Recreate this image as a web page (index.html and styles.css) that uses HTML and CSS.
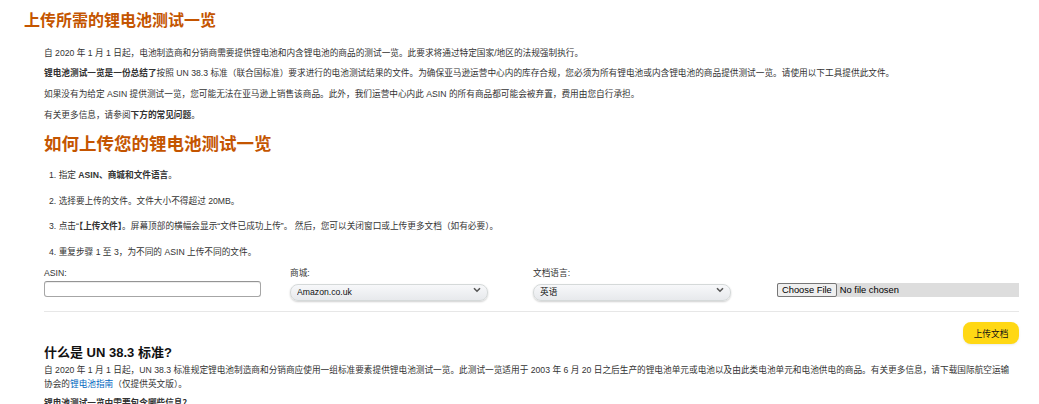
FILE: index.html
```html
<!DOCTYPE html>
<html lang="zh-CN">
<head>
  <meta charset="UTF-8">
  <meta name="viewport" content="width=device-width, initial-scale=1.0">
  <title>上传锂电池测试一览</title>
  <link rel="stylesheet" href="styles.css">
</head>
<body>
  <div class="page">
    <h1 class="title">上传所需的锂电池测试一览</h1>

    <div class="intro">
      <p>自 2020 年 1 月 1 日起，电池制造商和分销商需要提供锂电池和内含锂电池的商品的测试一览。此要求将通过特定国家/地区的法规强制执行。</p>
      <p><b>锂电池测试一览是一份总结了</b>按照 UN 38.3 标准（联合国标准）要求进行的电池测试结果的文件。为确保亚马逊运营中心内的库存合规，您必须为所有锂电池或内含锂电池的商品提供测试一览。请使用以下工具提供此文件。</p>
      <p>如果没有为给定 ASIN 提供测试一览，您可能无法在亚马逊上销售该商品。此外，我们运营中心内此 ASIN 的所有商品都可能会被弃置，费用由您自行承担。</p>
      <p>有关更多信息，请参阅<b>下方的常见问题</b>。</p>
    </div>

    <h2 class="howto">如何上传您的锂电池测试一览</h2>

    <ol class="steps">
      <li>指定 <b>ASIN、商城和文件语言</b>。</li>
      <li>选择要上传的文件。文件大小不得超过 20MB。</li>
      <li>点击“<b>【上传文件】</b>。屏幕顶部的横幅会显示“文件已成功上传”。 然后，您可以关闭窗口或上传更多文档（如有必要）。</li>
      <li>重复步骤 1 至 3，为不同的 ASIN 上传不同的文件。</li>
    </ol>

    <form class="upload-form">
      <div class="fields">
        <div class="field">
          <label for="asin">ASIN:</label>
          <input type="text" id="asin" class="text-input">
        </div>
        <div class="field">
          <label for="market">商城:</label>
          <div class="select-wrap">
            <select id="market">
              <option>Amazon.co.uk</option>
            </select>
            <svg class="chevron" width="8" height="6" viewBox="0 0 8 6"><path d="M1 1.2 L4 4.2 L7 1.2" fill="none" stroke="#555" stroke-width="1.6"/></svg>
          </div>
        </div>
        <div class="field">
          <label for="lang">文档语言:</label>
          <div class="select-wrap">
            <select id="lang">
              <option>英语</option>
            </select>
            <svg class="chevron" width="8" height="6" viewBox="0 0 8 6"><path d="M1 1.2 L4 4.2 L7 1.2" fill="none" stroke="#555" stroke-width="1.6"/></svg>
          </div>
        </div>
        <div class="field field-file">
          <input type="file" class="file-input">
        </div>
      </div>
      <hr class="divider">
      <div class="actions">
        <button type="button" class="upload-btn">上传文档</button>
      </div>
    </form>

    <section class="faq">
      <h3>什么是 UN 38.3 标准?</h3>
      <p>自 2020 年 1 月 1 日起，UN 38.3 标准规定锂电池制造商和分销商应使用一组标准要素提供锂电池测试一览。此测试一览适用于 2003 年 6 月 20 日之后生产的锂电池单元或电池以及由此类电池单元和电池供电的商品。有关更多信息，请下载国际航空运输协会的<a href="#">锂电池指南</a>（仅提供英文版）。</p>
      <p class="faq-next">锂电池测试一览中需要包含哪些信息？</p>
    </section>
  </div>
</body>
</html>
```

FILE: styles.css
```css
* {
    box-sizing: border-box;
}

body {
    margin: 0;
    font-family: "Liberation Sans", "Noto Sans CJK SC", sans-serif;
    color: #333333;
    background: #ffffff;
    overflow: hidden;
}

.page {
    padding: 0 20px 0 24px;
}

.title {
    margin: 0;
    padding-top: 9px;
    font-size: 16px;
    line-height: 24px;
    color: #c45500;
    font-weight: bold;
}

.intro {
    display: flex;
    flex-direction: column;
    gap: 7.7px;
    margin-top: 13.5px;
    padding-left: 20px;
}

.intro p {
    margin: 0;
    font-size: 8.67px;
    line-height: 13px;
}

.howto {
    margin: 10.4px 0 0 20px;
    font-size: 17.5px;
    line-height: 24px;
    color: #c45500;
    font-weight: bold;
}

.steps {
    margin: 13.5px 0 0 0;
    padding-left: 25px;
    list-style-position: inside;
    display: flex;
    flex-direction: column;
    gap: 12.5px;
}

.steps li {
    font-size: 8.67px;
    line-height: 13px;
}

.upload-form {
    margin-top: 8px;
    padding-left: 20px;
}

.fields {
    display: grid;
    grid-template-columns: 246px 243px 244px 1fr;
}

.field {
    display: flex;
    flex-direction: column;
}

.field label {
    font-size: 8.67px;
    line-height: 13px;
    margin-bottom: 1.5px;
    color: #333333;
}

.text-input {
    width: 217px;
    height: 16px;
    border: 1px solid #a6a6a6;
    border-top-color: #949494;
    border-radius: 3px;
    box-shadow: 0 1px 0 rgba(255, 255, 255, 0.5), 0 1px 0 rgba(0, 0, 0, 0.07) inset;
    font-size: 8.67px;
    padding: 0 4px;
}

.select-wrap {
    position: relative;
    width: 198px;
}

.select-wrap select {
    appearance: none;
    -webkit-appearance: none;
    width: 198px;
    height: 17px;
    padding: 0 16px 0 6px;
    font-family: inherit;
    font-size: 8.67px;
    color: #0f1111;
    border: 1px solid #d5d9d9;
    border-radius: 8px;
    background: linear-gradient(to bottom, #f7f8fa, #e7e9ec);
    box-shadow: 0 1px 2px rgba(15, 17, 17, 0.2);
}

.chevron {
    position: absolute;
    right: 7px;
    top: 6px;
    pointer-events: none;
}

.field-file {
    justify-content: flex-end;
    padding-bottom: 4px;
}

.file-input {
    width: 242px;
    height: 14px;
    background: #dddddd;
    font-family: "Liberation Sans", sans-serif;
    font-size: 9.33px;
    line-height: 12px;
    color: #000000;
}

.file-input::file-selector-button {
    font-family: "Liberation Sans", sans-serif;
    font-size: 9.33px;
    height: 14px;
    padding: 0 4px;
    margin-right: 3px;
    border: 1px solid #767676;
    border-radius: 2px;
    background: #efefef;
    color: #000000;
}

.divider {
    margin: 10px 0 0 0;
    border: 0;
    border-top: 1px solid #e7e7e7;
}

.actions {
    display: flex;
    justify-content: flex-end;
    margin-top: 10px;
}

.upload-btn {
    width: 56px;
    height: 22px;
    border: 0;
    border-radius: 8px;
    background: #ffd814;
    font-family: inherit;
    font-size: 8.67px;
    color: #0f1111;
    box-shadow: 0 1px 2px rgba(213, 217, 217, 0.5);
}

.faq {
    padding-left: 20px;
}

.faq h3 {
    margin: 1px 0 0 0;
    font-size: 13px;
    line-height: 16px;
    color: #111111;
}

.faq p {
    margin: 2px 0 0 0;
    max-width: 969px;
    font-size: 8.67px;
    line-height: 14px;
}

.faq a {
    color: #0066c0;
    text-decoration: none;
}

.faq .faq-next {
    margin-top: 5px;
    font-weight: bold;
}
```
